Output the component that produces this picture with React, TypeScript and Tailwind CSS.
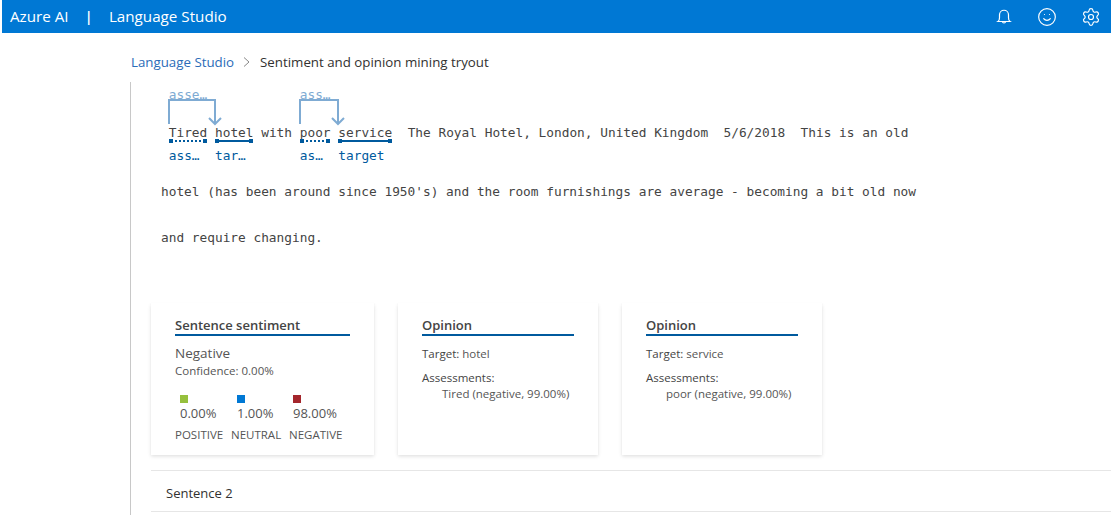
import React from 'react';
import { Smile, Settings } from 'lucide-react';

const Token = ({ text, below, above }: { text: string; below: string; above?: string }) => (
  <span className="relative inline-block">
    {above && <span className="absolute left-0 bottom-[38px] text-[#7fabd3]">{above}</span>}
    {text}
    <span className="absolute left-0 top-[23px] text-[#005a9e]">{below}</span>
  </span>
);

const Arc = ({ width, left }: { width: number; left: number }) => (
  <svg className="absolute top-[-25px]" style={{ left, width: width + 8 }} height="27" fill="none" stroke="#7fabd3" strokeWidth="2">
    <path d={`M1 25V1H${width}V25`} />
    <path d={`M${width - 6} 19L${width} 25L${width + 6} 19`} />
  </svg>
);

const Underline = ({ left, width, dotted }: { left: number; width: number; dotted?: boolean }) => (
  <svg className="absolute top-[14px]" style={{ left, width }} height="6" fill="#005a9e" stroke="#005a9e">
    <rect x="0" y="1" width="4" height="4" stroke="none" />
    <rect x={width - 4} y="1" width="4" height="4" stroke="none" />
    <line x1="2" y1="3" x2={width - 2} y2="3" strokeWidth="2" strokeDasharray={dotted ? '2 2' : undefined} />
  </svg>
);

const Card = ({ title, width, children }: { title: string; width: string; children: React.ReactNode }) => (
  <div className={`${width} h-[152px] bg-white shadow-[0_1.6px_3.6px_rgba(0,0,0,0.13),0_0.3px_0.9px_rgba(0,0,0,0.11)] pl-6 pr-6 pt-[12px]`}>
    <div className="text-[13px] leading-[20px] font-semibold text-[#444] border-b-2 border-[#005a9e] h-[21px]">{title}</div>
    {children}
  </div>
);

const Opinion = ({ target, assessment }: { target: string; assessment: string }) => (
  <Card title="Opinion" width="w-[200px]">
    <div className="text-[11.5px] text-[#555] mt-[10px] leading-[16px]"><span className="text-[#444] font-medium">Target:</span> {target}</div>
    <div className="text-[11.5px] text-[#444] mt-[8px] leading-[16px] font-medium">Assessments:</div>
    <div className="text-[11.5px] text-[#555] pl-5 leading-[16px]">{assessment}</div>
  </Card>
);

const scores = [
  { color: 'bg-[#96c03d]', value: '0.00%', label: 'POSITIVE', w: 'w-[56px]', pad: 'pl-[5px]' },
  { color: 'bg-[#0078d4]', value: '1.00%', label: 'NEUTRAL', w: 'w-[58px]', pad: 'pl-[6px]' },
  { color: 'bg-[#a4262c]', value: '98.00%', label: 'NEGATIVE', w: 'w-[60px]', pad: 'pl-[4px]' },
];

export default function App() {
  return (
    <div className="w-[1111px] h-[515px] overflow-hidden bg-white font-['Open_Sans',sans-serif] text-[#323130]">
      {/* Header */}
      <div className="ml-[2px] h-[33px] bg-[#0078d4] text-white flex items-center pl-[8px] text-[15.2px]">
        <span>Azure AI</span>
        <span className="ml-[16px] font-semibold">|</span>
        <span className="ml-[16px]">Language Studio</span>
        <div className="ml-auto flex items-center gap-[24px] pr-[10px]">
          <svg width="18" height="18" viewBox="0 0 24 24" fill="none" stroke="currentColor" strokeWidth="1.6">
            <path d="M4 18c1.5-1 2-2 2-5V9a6 6 0 0 1 12 0v4c0 3 .5 4 2 5z" />
            <path d="M10 18a2 2 0 0 0 4 0" />
          </svg>
          <Smile className="w-5 h-5" strokeWidth={1.4} />
          <Settings className="w-5 h-5" strokeWidth={1.4} />
        </div>
      </div>

      {/* Breadcrumb */}
      <div className="pl-[131px] pt-[20px] h-[49px] flex items-start text-[13.3px] leading-[18px]">
        <span className="text-[#2b6cb8]">Language Studio</span>
        <svg className="mx-[9px] mt-[4px]" width="8" height="10" fill="none" stroke="#888"><path d="M1 0.5L6 5L1 9.5" /></svg>
        <span>Sentiment and opinion mining tryout</span>
      </div>

      {/* Main */}
      <div className="ml-[130px] h-[433px] border-l border-[#c8c8c8] pl-[20px]">
        <div className="ml-[10px] pt-[42px] font-['DejaVu_Sans_Mono',monospace] text-[12.8px] leading-[18px] whitespace-pre text-[#444]">
          <div className="relative">
            {' '}<Token text="Tired" below="ass…" above="asse…" /> <Token text="hotel" below="tar…" /> with <Token text="poor" below="as…" above="ass…" /> <Token text="service" below="target" />  The Royal Hotel, London, United Kingdom  5/6/2018  This is an old
            <Arc left={7} width={47} />
            <Arc left={138} width={39} />
            <Underline left={8} width={38} dotted />
            <Underline left={54} width={38} />
            <Underline left={139} width={30} dotted />
            <Underline left={177} width={54} />
          </div>
          <div className="mt-[41px]">hotel (has been around since 1950's) and the room furnishings are average - becoming a bit old now</div>
          <div className="mt-[28px]">and require changing.</div>
        </div>

        {/* Cards */}
        <div className="flex gap-6 mt-[56px]">
          <Card title="Sentence sentiment" width="w-[223px]">
            <div className="text-[13.5px] leading-[18px] text-[#555] mt-[8px]">Negative</div>
            <div className="text-[11.5px] leading-[16px] text-[#555] mt-[1px]">Confidence: 0.00%</div>
            <div className="flex mt-[16px] text-[#555]">
              {scores.map(s => (
                <div key={s.label} className={s.w}>
                  <div className={s.pad}><div className={`w-2 h-2 ${s.color}`} /></div>
                  <div className={`${s.pad} text-[13px] leading-[18px] mt-[1px]`}>{s.value}</div>
                  <div className="text-[11.5px] leading-[16px] mt-[5px]">{s.label}</div>
                </div>
              ))}
            </div>
          </Card>
          <Opinion target="hotel" assessment="Tired (negative, 99.00%)" />
          <Opinion target="service" assessment="poor (negative, 99.00%)" />
        </div>

        {/* Sentence rows */}
        <div className="mt-[15px] border-t border-[#e6e6e6] h-[42px] border-b flex items-center pl-[15px] pt-[5px] text-[13px]">Sentence 2</div>
      </div>
    </div>
  );
}
